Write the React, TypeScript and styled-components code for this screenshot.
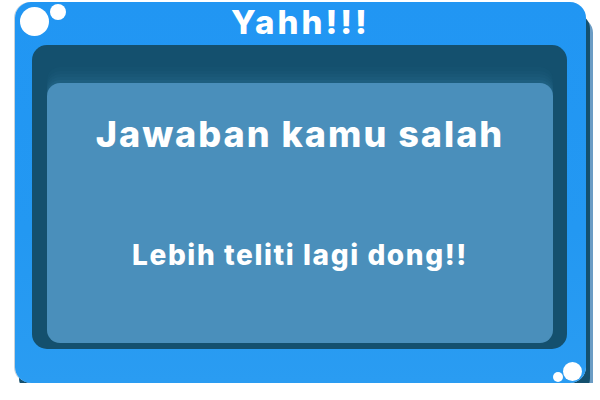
import styled, { createGlobalStyle } from "styled-components";

const GlobalStyle = createGlobalStyle`
  body {
    margin: 0;
    background: #ffffff;
    font-family: "Inter", "Liberation Sans", sans-serif;
  }
`;

const Frame = styled.div`
  position: relative;
  box-sizing: border-box;
  width: 571px;
  height: 381px;
  margin: 2px 0 0 15px;
  border-radius: 16px;
  background: linear-gradient(180deg, #2196f3 0%, #2398f2 60%, #2a9cf2 100%);
  box-shadow: -1px 0 0 rgba(40, 70, 100, 0.25), 4px 11px 0 #14506e,
    7px 15px 0 #6b9cc4;
  display: flex;
  flex-direction: column;
  align-items: stretch;
`;

const Title = styled.h1`
  margin: 0;
  height: 43px;
  display: flex;
  align-items: center;
  justify-content: center;
  padding-bottom: 3px;
  box-sizing: border-box;
  color: #ffffff;
  font-size: 33px;
  font-weight: 800;
  letter-spacing: 3px;
`;

const Well = styled.div`
  box-sizing: border-box;
  height: 304px;
  margin: 0 19px 0 17px;
  padding: 38px 14px 6px 15px;
  border-radius: 15px;
  background: #14506e;
  display: flex;
`;

const Screen = styled.div`
  flex: 1;
  border-radius: 13px;
  background: #4a8fbb;
  box-shadow: 0 -3px 0 #1e5f80, 0 -6px 0 #1b5a7a, 0 -9px 0 #195776,
    0 -12px 0 #175473, 0 -16px 0 #155270;
  display: flex;
  flex-direction: column;
  align-items: center;
  color: #ffffff;
`;

const Message = styled.h2<{ $size: number; $top: number; $track: number }>`
  margin: ${(p) => p.$top}px 0 0;
  font-size: ${(p) => p.$size}px;
  font-weight: 800;
  line-height: 1.2;
  letter-spacing: ${(p) => p.$track}px;
`;

const Bubble = styled.span<{ $x: number; $y: number; $d: number }>`
  position: absolute;
  left: ${(p) => p.$x}px;
  top: ${(p) => p.$y}px;
  width: ${(p) => p.$d}px;
  height: ${(p) => p.$d}px;
  border-radius: 50%;
  background: #ffffff;
`;

export default function App() {
  return (
    <>
      <GlobalStyle />
      <Frame>
        <Bubble $x={5} $y={5} $d={29} />
        <Bubble $x={35} $y={2} $d={16} />
        <Bubble $x={538} $y={370} $d={10} />
        <Bubble $x={548} $y={360} $d={19} />
        <Title>Yahh!!!</Title>
        <Well>
          <Screen>
            <Message $size={36} $top={30} $track={2}>
              Jawaban kamu salah
            </Message>
            <Message $size={28} $top={83} $track={1.6}>
              Lebih teliti lagi dong!!
            </Message>
          </Screen>
        </Well>
      </Frame>
    </>
  );
}
